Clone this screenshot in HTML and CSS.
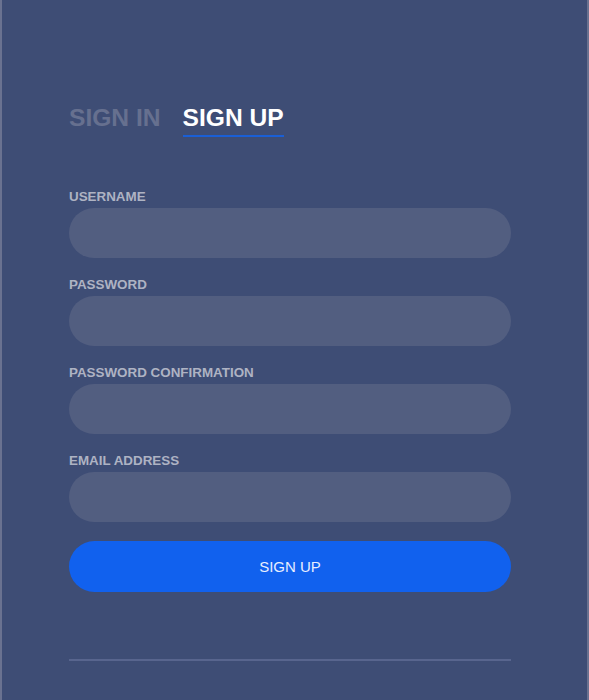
FILE: index.html
```html
<!DOCTYPE html>
<html lang="en">
<head>
  <meta charset="UTF-8">
  <title>Sign Up</title>
  <link rel="stylesheet" href="styles.css">
</head>
<body>
  <div class="login-wrap">
    <div class="login-form">
      <div class="tabs">
        <span class="tab">Sign In</span>
        <span class="tab active">Sign Up</span>
      </div>
      <div class="group">
        <label for="user">Username</label>
        <input type="text" id="user" class="field" />
      </div>
      <div class="group">
        <label for="pass">Password</label>
        <input type="password" id="pass" class="field" />
      </div>
      <div class="group">
        <label for="pass2">Password Confirmation</label>
        <input type="password" id="pass2" class="field" />
      </div>
      <div class="group">
        <label for="email">Email Address</label>
        <input type="text" id="email" class="field" />
      </div>
      <button class="button">Sign Up</button>
      <div class="hr"></div>
    </div>
  </div>
</body>
</html>
```

FILE: styles.css
```css
    body {
      font-family: "Liberation Sans", Arial, sans-serif;
      background: #6a7290;
      margin: 0;
      padding: 0;
      height: 100vh;
      overflow: hidden;
    }
    .login-wrap {
      background: #3e4d75;
      margin: 0 2px;
      min-height: 700px;
      padding: 104px 0 0 67px;
      box-sizing: border-box;
    }
    .login-form {
      width: 442px;
    }
    .tabs {
      display: flex;
      gap: 22px;
      margin-bottom: 52px;
    }
    .tab {
      font-size: 24.6px;
      line-height: 28px;
      font-weight: bold;
      text-transform: uppercase;
      color: #66708f;
      padding-bottom: 3px;
      border-bottom: 2px solid transparent;
    }
    .tab.active {
      color: #fff;
      border-bottom-color: #1a5fd6;
    }
    .group {
      margin-bottom: 19px;
    }
    .group label {
      display: block;
      font-size: 13.4px;
      line-height: 16px;
      font-weight: bold;
      text-transform: uppercase;
      color: #aeb3c3;
      margin-bottom: 3px;
    }
    .field {
      display: block;
      width: 100%;
      height: 50px;
      border: none;
      border-radius: 25px;
      background: #525e80;
      padding: 0 20px;
      box-sizing: border-box;
      color: #fff;
      font-size: 15px;
      outline: none;
    }
    .button {
      display: block;
      width: 100%;
      height: 51px;
      border: none;
      border-radius: 26px;
      background: #1161ee;
      color: #e8eeff;
      font-family: inherit;
      font-size: 15px;
      text-transform: uppercase;
      cursor: pointer;
    }
    .hr {
      height: 2px;
      background: #58658e;
      margin-top: 67px;
    }
```
